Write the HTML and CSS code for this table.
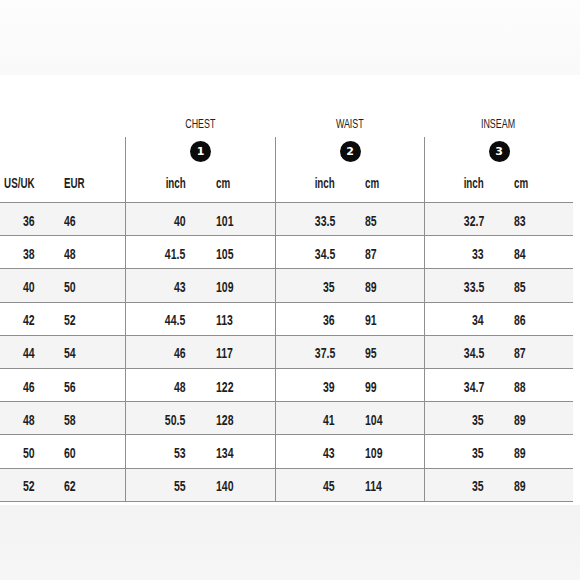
FILE: index.html
```html
<!DOCTYPE html>
<html lang="en">
<head>
<meta charset="utf-8">
<title>Size chart</title>
<link rel="stylesheet" href="styles.css">
</head>
<body>
<div class="top-band"></div>
<div class="chart">
  <div class="titles">
    <div></div>
    <div class="title"><span>CHEST</span></div>
    <div class="title"><span>WAIST</span></div>
    <div class="title"><span>INSEAM</span></div>
  </div>
  <div class="row head">
    <div class="sizes"><span class="a">US/UK</span><span class="b">EUR</span></div>
    <div class="group"><span class="badge">1</span><div class="pair"><span class="a">inch</span><span class="b">cm</span></div></div>
    <div class="group"><span class="badge">2</span><div class="pair"><span class="a">inch</span><span class="b">cm</span></div></div>
    <div class="group"><span class="badge">3</span><div class="pair"><span class="a">inch</span><span class="b">cm</span></div></div>
  </div>

  <div class="row shade">
    <div class="sizes"><span class="a">36</span><span class="b">46</span></div>
    <div class="group"><div class="pair"><span class="a">40</span><span class="b">101</span></div></div>
    <div class="group"><div class="pair"><span class="a">33.5</span><span class="b">85</span></div></div>
    <div class="group"><div class="pair"><span class="a">32.7</span><span class="b">83</span></div></div>
  </div>
  <div class="row">
    <div class="sizes"><span class="a">38</span><span class="b">48</span></div>
    <div class="group"><div class="pair"><span class="a">41.5</span><span class="b">105</span></div></div>
    <div class="group"><div class="pair"><span class="a">34.5</span><span class="b">87</span></div></div>
    <div class="group"><div class="pair"><span class="a">33</span><span class="b">84</span></div></div>
  </div>
  <div class="row shade">
    <div class="sizes"><span class="a">40</span><span class="b">50</span></div>
    <div class="group"><div class="pair"><span class="a">43</span><span class="b">109</span></div></div>
    <div class="group"><div class="pair"><span class="a">35</span><span class="b">89</span></div></div>
    <div class="group"><div class="pair"><span class="a">33.5</span><span class="b">85</span></div></div>
  </div>
  <div class="row">
    <div class="sizes"><span class="a">42</span><span class="b">52</span></div>
    <div class="group"><div class="pair"><span class="a">44.5</span><span class="b">113</span></div></div>
    <div class="group"><div class="pair"><span class="a">36</span><span class="b">91</span></div></div>
    <div class="group"><div class="pair"><span class="a">34</span><span class="b">86</span></div></div>
  </div>
  <div class="row shade">
    <div class="sizes"><span class="a">44</span><span class="b">54</span></div>
    <div class="group"><div class="pair"><span class="a">46</span><span class="b">117</span></div></div>
    <div class="group"><div class="pair"><span class="a">37.5</span><span class="b">95</span></div></div>
    <div class="group"><div class="pair"><span class="a">34.5</span><span class="b">87</span></div></div>
  </div>
  <div class="row">
    <div class="sizes"><span class="a">46</span><span class="b">56</span></div>
    <div class="group"><div class="pair"><span class="a">48</span><span class="b">122</span></div></div>
    <div class="group"><div class="pair"><span class="a">39</span><span class="b">99</span></div></div>
    <div class="group"><div class="pair"><span class="a">34.7</span><span class="b">88</span></div></div>
  </div>
  <div class="row shade">
    <div class="sizes"><span class="a">48</span><span class="b">58</span></div>
    <div class="group"><div class="pair"><span class="a">50.5</span><span class="b">128</span></div></div>
    <div class="group"><div class="pair"><span class="a">41</span><span class="b">104</span></div></div>
    <div class="group"><div class="pair"><span class="a">35</span><span class="b">89</span></div></div>
  </div>
  <div class="row">
    <div class="sizes"><span class="a">50</span><span class="b">60</span></div>
    <div class="group"><div class="pair"><span class="a">53</span><span class="b">134</span></div></div>
    <div class="group"><div class="pair"><span class="a">43</span><span class="b">109</span></div></div>
    <div class="group"><div class="pair"><span class="a">35</span><span class="b">89</span></div></div>
  </div>
  <div class="row shade">
    <div class="sizes"><span class="a">52</span><span class="b">62</span></div>
    <div class="group"><div class="pair"><span class="a">55</span><span class="b">140</span></div></div>
    <div class="group"><div class="pair"><span class="a">45</span><span class="b">114</span></div></div>
    <div class="group"><div class="pair"><span class="a">35</span><span class="b">89</span></div></div>
  </div>
</div>
<div class="bottom-band"></div>
</body>
</html>
```

FILE: styles.css
```css
html, body {
  margin: 0;
  padding: 0;
}
body {
  width: 580px;
  height: 580px;
  overflow: hidden;
  background: #ffffff;
  color: #1d1d1d;
  font-family: "Liberation Sans", Arial, sans-serif;
  display: flex;
  flex-direction: column;
}
.top-band {
  height: 75px;
  flex: none;
  background: linear-gradient(180deg, #fdfdfd 0%, #f9f9f9 100%);
}
.chart {
  width: 573px;
  flex: none;
}
.titles,
.row {
  display: grid;
  grid-template-columns: 125px 150px 149px 149px;
}
.titles {
  height: 62px;
}
.title {
  align-self: end;
  padding-bottom: 5px;
  font-size: 12px;
  line-height: 16px;
  text-align: center;
  color: #222;
}
.title span {
  display: inline-block;
  transform: scaleX(0.74);
}
.row {
  box-sizing: border-box;
  height: 33.2px;
  border-bottom: 1px solid #8e8e8e;
  font-size: 14px;
  font-weight: 700;
  line-height: 16px;
}
.row.shade {
  background: #f4f4f4;
}
.row.head {
  height: 66px;
}
.sizes {
  display: grid;
  grid-template-columns: 35px auto;
  column-gap: 29px;
  align-self: center;
  padding-top: 3px;
}
.head .sizes {
  align-self: end;
  padding-top: 0;
  padding-bottom: 11px;
}
.a,
.b {
  display: inline-block;
  white-space: nowrap;
  transform: scaleX(0.75);
}
.head .a,
.head .b {
  transform: scaleX(0.7);
}
.a {
  justify-self: end;
  transform-origin: right center;
}
.b {
  justify-self: start;
  transform-origin: left center;
}
.group {
  border-left: 1px solid #8e8e8e;
  display: flex;
  flex-direction: column;
  align-items: center;
  justify-content: center;
  padding-top: 3px;
}
.head .group {
  justify-content: flex-start;
  padding-top: 4px;
}
.badge {
  width: 21px;
  height: 21px;
  border-radius: 50%;
  background: #0b0b0b;
  color: #ffffff;
  font-family: "DejaVu Sans", sans-serif;
  font-size: 11px;
  font-weight: 700;
  line-height: 21px;
  text-align: center;
}
.pair {
  width: 100%;
  display: grid;
  grid-template-columns: 1fr 1fr;
  column-gap: 30px;
}
.head .pair {
  margin-top: 13px;
}
.bottom-band {
  flex: 1;
  margin-top: 3px;
  background: linear-gradient(180deg, #f3f3f3 0%, #f6f6f6 100%);
}
```
